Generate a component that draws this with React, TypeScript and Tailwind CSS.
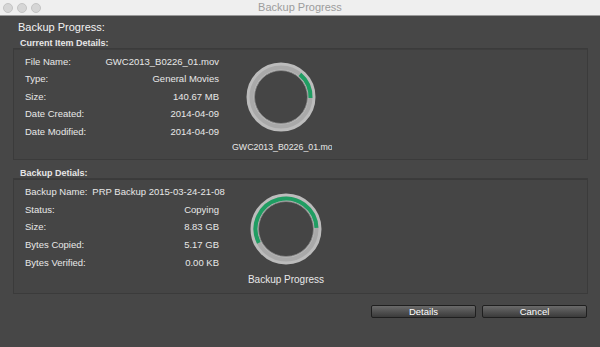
import React from "react";

function pt(cx: number, cy: number, r: number, deg: number) {
  const a = (deg * Math.PI) / 180;
  return [cx + r * Math.sin(a), cy - r * Math.cos(a)];
}

function arc(cx: number, cy: number, r: number, a0: number, a1: number) {
  const [x0, y0] = pt(cx, cy, r, a0);
  const [x1, y1] = pt(cx, cy, r, a1);
  const large = a1 - a0 > 180 ? 1 : 0;
  return `M ${x0} ${y0} A ${r} ${r} 0 ${large} 1 ${x1} ${y1}`;
}

function Ring({ size, a0, a1 }: { size: number; a0: number; a1: number }) {
  const c = size / 2;
  return (
    <svg width={size} height={size} viewBox={`0 0 ${size} ${size}`}>
      <circle cx={c} cy={c} r={c - 4.5} fill="none" stroke="#bcbcbc" strokeWidth={8} />
      <circle cx={c} cy={c} r={c - 5.5} fill="none" stroke="#a9a9a9" strokeWidth={4} />
      <circle cx={c} cy={c} r={c - 8.5} fill="none" stroke="#8f8f8f" strokeWidth={0.8} />
      <path d={arc(c, c, c - 5.5, a0, a1)} fill="none" stroke="#1f9d62" strokeWidth={4} />
    </svg>
  );
}

function Row({ label, value, h }: { label: string; value: string; h: string }) {
  return (
    <div className={`flex ${h} items-center justify-between`}>
      <span>{label}</span>
      <span>{value}</span>
    </div>
  );
}

export default function App() {
  const h1 = "h-[17.6px]";
  const h2 = "h-[17.8px]";
  return (
    <div
      className="w-[600px] h-[347px] bg-[#474747] text-[#e8e8e8] overflow-hidden"
      style={{ fontFamily: '"Liberation Sans", Arial, sans-serif' }}
    >
      <div className="grid h-[16px] grid-cols-[1fr_auto_1fr] items-center border-b border-[#9a9a9a] bg-[#efefef]">
        <div className="flex gap-[4px] pl-[3px]">
          <span className="h-[10px] w-[10px] rounded-full border border-[#c4c4c4] bg-[#d6d6d6]" />
          <span className="h-[10px] w-[10px] rounded-full border border-[#c4c4c4] bg-[#d6d6d6]" />
          <span className="h-[10px] w-[10px] rounded-full border border-[#c4c4c4] bg-[#d6d6d6]" />
        </div>
        <div className="text-[11px] leading-[15px] text-[#9c9c9c]">Backup Progress</div>
        <div />
      </div>

      <div className="pl-[13px] pr-[12px]">
        <div className="pl-[5px] pt-[4px] text-[11px] leading-[14px] text-[#f2f2f2]">Backup Progress:</div>
        <div className="pl-[7px] pt-[4px] text-[9px] font-bold leading-[10px] text-[#e6e6e6]">Current Item Details:</div>

        <div className="flex h-[112px] border border-[#3b3b3b] bg-[#454545] shadow-[inset_0_1px_0_#3e3e3e]">
          <div className="w-[205px] pl-[11px] pt-[4px] text-[9.5px]">
            <Row h={h1} label="File Name:" value="GWC2013_B0226_01.mov" />
            <Row h={h1} label="Type:" value="General Movies" />
            <Row h={h1} label="Size:" value="140.67 MB" />
            <Row h={h1} label="Date Created:" value="2014-04-09" />
            <Row h={h1} label="Date Modified:" value="2014-04-09" />
          </div>
          <div className="ml-[12px] flex w-[100px] flex-col items-center pt-[13px]">
            <Ring size={70} a0={40} a1={92} />
            <div className="ml-[2px] mt-[10px] w-[100px] overflow-hidden whitespace-nowrap text-[8.8px] leading-[11px]">
              GWC2013_B0226_01.mov
            </div>
          </div>
        </div>

        <div className="pl-[7px] pt-[8px] text-[9px] font-bold leading-[10px] text-[#e6e6e6]">Backup Detials:</div>
        <div className="flex h-[116px] border border-[#3b3b3b] bg-[#454545] shadow-[inset_0_1px_0_#3a3a3a]">
          <div className="w-[205px] pl-[11px] pt-[4px] text-[9.5px]">
            <div className={`flex ${h2} items-center gap-[5px] whitespace-nowrap`}>
              <span>Backup Name:</span>
              <span>PRP Backup 2015-03-24-21-08</span>
            </div>
            <Row h={h2} label="Status:" value="Copying" />
            <Row h={h2} label="Size:" value="8.83 GB" />
            <Row h={h2} label="Bytes Copied:" value="5.17 GB" />
            <Row h={h2} label="Bytes Verified:" value="0.00 KB" />
          </div>
          <div className="ml-[15px] flex w-[104px] flex-col items-center pt-[14px]">
            <Ring size={72} a0={243} a1={448} />
            <div className="mt-[9px] whitespace-nowrap text-[10px] leading-[12px]">Backup Progress</div>
          </div>
        </div>

        <div className="mt-[11px] flex justify-end gap-[6px] pr-[1px]">
          <button className="h-[13px] w-[105px] rounded-[2px] border border-[#1f1f1f] bg-gradient-to-b from-[#6a6a6a] to-[#3b3b3b] text-[9.5px] leading-[11px] text-white">
            Details
          </button>
          <button className="h-[13px] w-[105px] rounded-[2px] border border-[#1f1f1f] bg-gradient-to-b from-[#6a6a6a] to-[#3b3b3b] text-[9.5px] leading-[11px] text-white">
            Cancel
          </button>
        </div>
      </div>
    </div>
  );
}
